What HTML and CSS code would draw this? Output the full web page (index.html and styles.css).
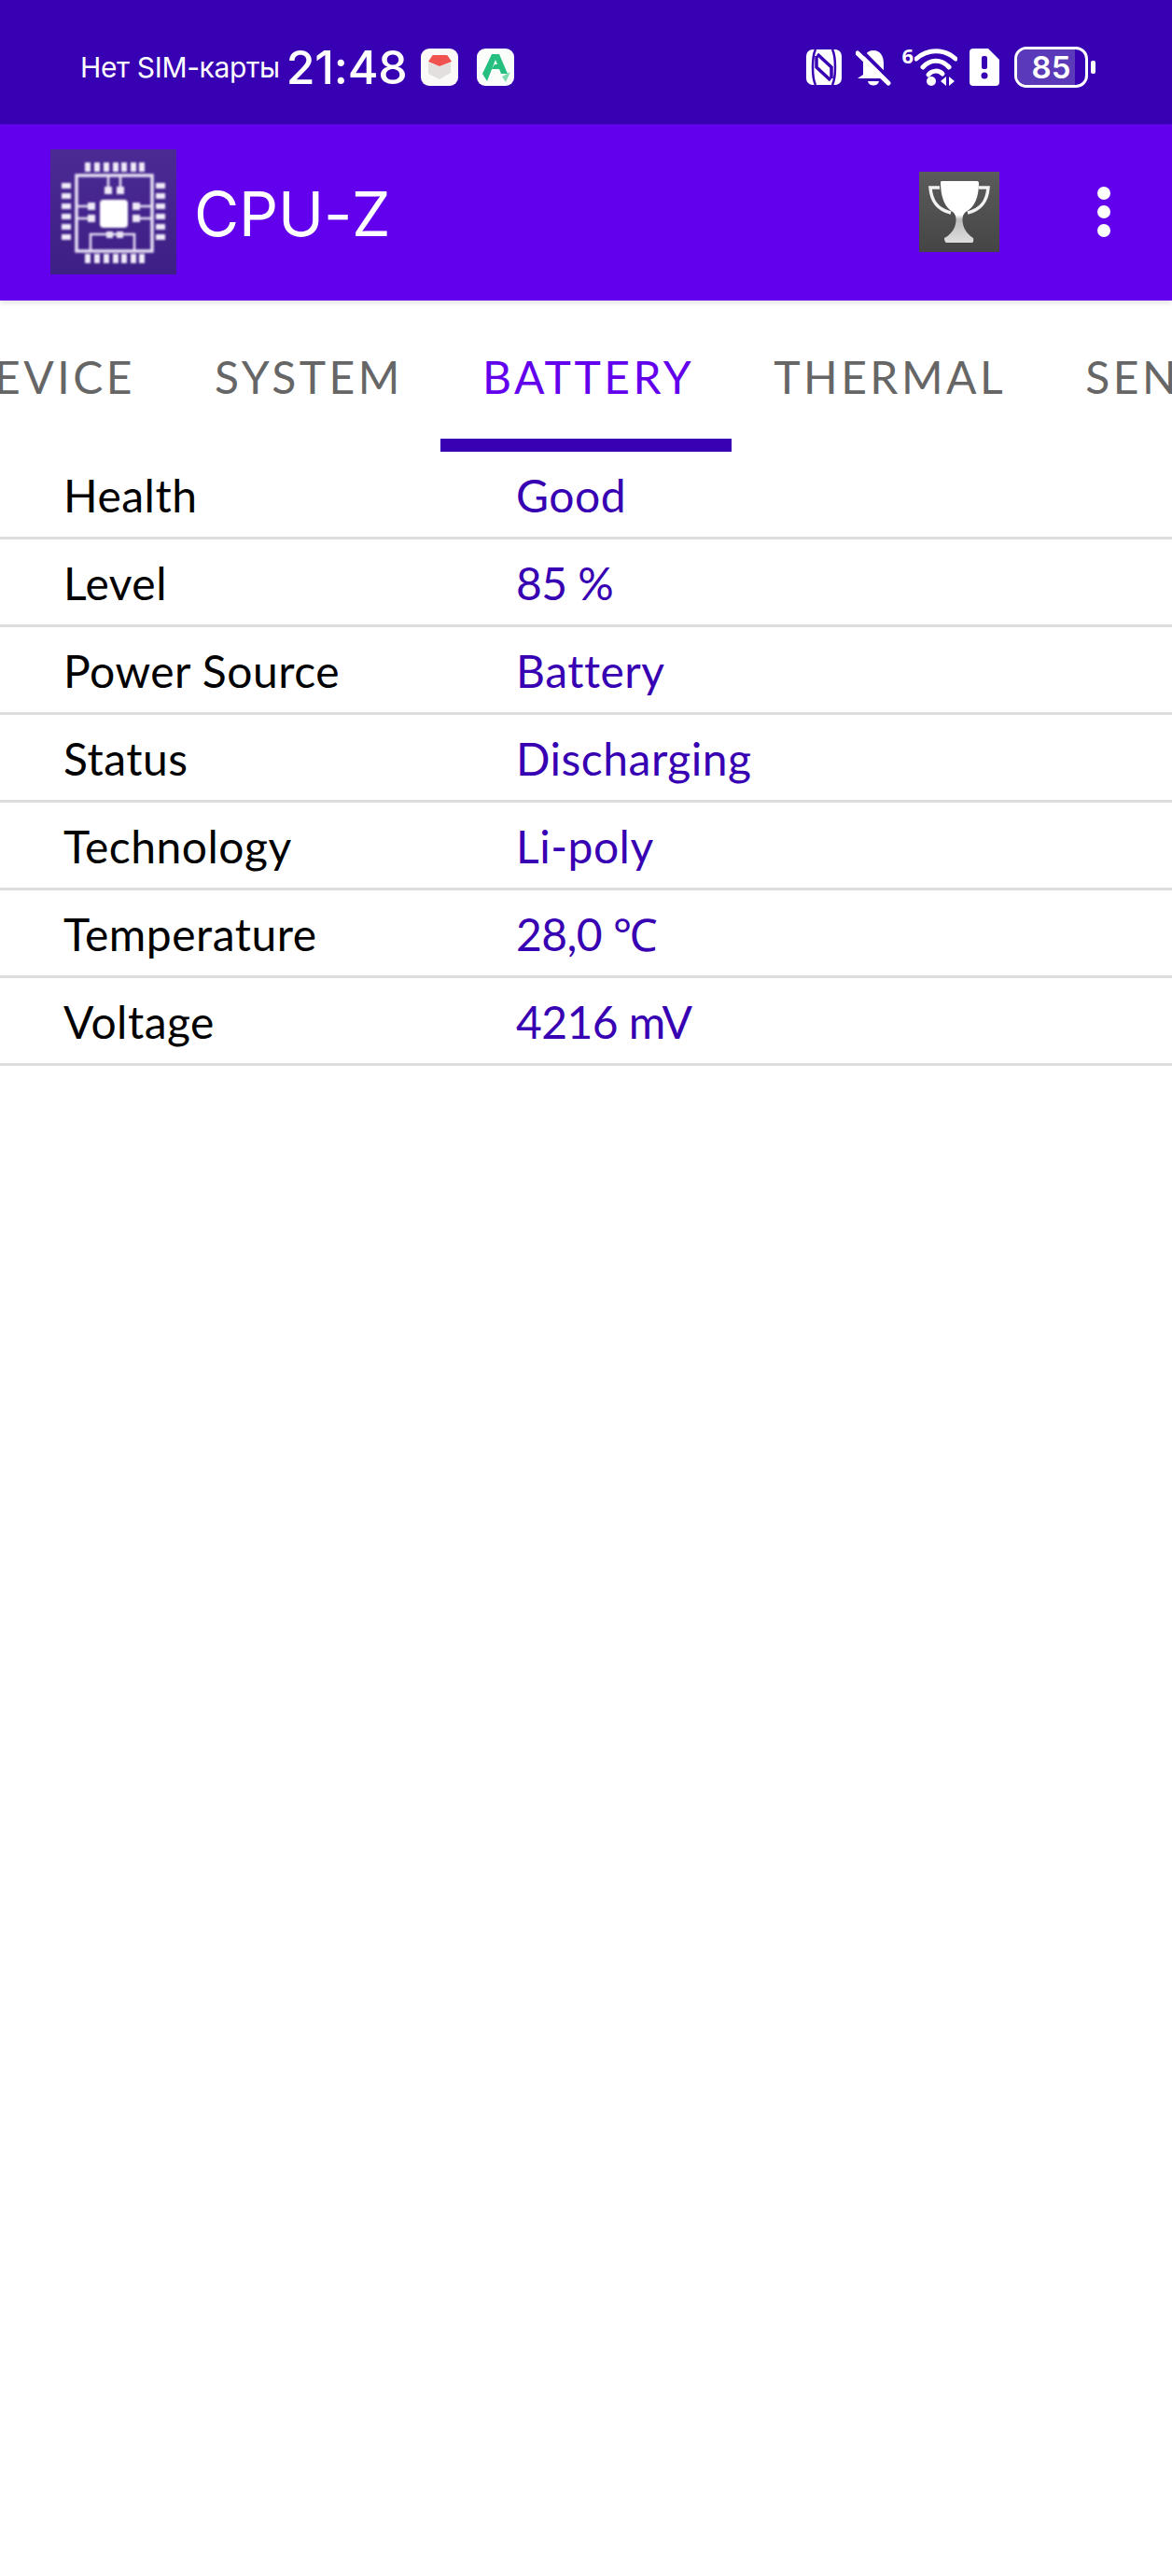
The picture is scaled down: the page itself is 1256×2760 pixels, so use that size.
FILE: index.html
```html
<!DOCTYPE html>
<html lang="en">
<head>
    <meta charset="UTF-8">
    <meta name="viewport" content="width=device-width, initial-scale=1.0">
    <title>CPU-Z</title>
    <link rel="stylesheet" href="styles.css">
</head>
<body>
    <!-- Status bar -->
    <div class="status-bar">
        <div class="status-left">
            <span class="sim-text">Нет SIM-карты</span>
            <span class="clock">21:48</span>
            <span class="app-badge">
                <svg viewBox="0 0 40 40" width="40" height="40">
                    <rect width="40" height="40" rx="9" fill="#fbf8f8"/>
                    <path d="M8 15 L20 19 L32 15 V26 L20 33 L8 27 Z" fill="#e3dfdf"/>
                    <path d="M8 14 L12 8 Q12 7 14 7 H27 Q29 7 29 8 L33 14 L20 19 Z" fill="#f0524f"/>
                </svg>
            </span>
            <span class="app-badge">
                <svg viewBox="0 0 40 40" width="40" height="40">
                    <rect width="40" height="40" rx="9" fill="#fbfdfb"/>
                    <path d="M16 6 H24 L33 27 H26 L24 22 H16 L19 17 H22 L20 12 L11 35 L6 27 Z" fill="#25c07f"/>
                    <path d="M27 30 L36 25 L31 36 Z" fill="#7fdcae"/>
                </svg>
            </span>
        </div>
        <div class="status-right">
            <svg class="icon-nfc" viewBox="0 0 38 38" width="38" height="38">
                <rect width="38" height="38" rx="7" fill="#fff"/>
                <path d="M10 0 C6 8 6 30 10 38" fill="none" stroke="#3700b3" stroke-width="2.5"/>
                <path d="M28 0 C32 8 32 30 28 38" fill="none" stroke="#3700b3" stroke-width="2.5"/>
                <path d="M12 5 L27 19 V31 M26 33 L11 19 V7" fill="none" stroke="#3700b3" stroke-width="3.5"/>
            </svg>
            <svg class="icon-bell" viewBox="0 0 38 40" width="38" height="40">
                <path d="M19 2 C27 2 30 9 30 16 V25 L36 32 H2 L8 28 V15 C8 8 12 2 19 2 Z" fill="#fff"/>
                <path d="M13 35 H25 C24 41 14 41 13 35 Z" fill="#fff"/>
                <path d="M5 1 L38 34" stroke="#3700b3" stroke-width="4"/>
                <path d="M2 5 L35 37" stroke="#fff" stroke-width="5" stroke-linecap="round"/>
            </svg>
            <span class="wifi-six">6</span>
            <svg class="icon-wifi" viewBox="0 0 46 42" width="46" height="42">
                <path d="M2 12 C14 1 32 1 44 12" fill="none" stroke="#fff" stroke-width="5" stroke-linecap="round"/>
                <path d="M9 21 C17 12 29 12 37 21" fill="none" stroke="#fff" stroke-width="5" stroke-linecap="round"/>
                <path d="M15 29 C19 24 26 24 30 28" fill="none" stroke="#fff" stroke-width="5" stroke-linecap="round"/>
                <circle cx="18" cy="36" r="5" fill="#fff"/>
                <path d="M34 31 V41 L28 36 Z M37 31 V41 L43 36 Z" fill="#fff"/>
            </svg>
            <svg class="icon-sim" viewBox="0 0 32 40" width="32" height="40">
                <path d="M4 0 H20 L32 12 V36 Q32 40 28 40 H4 Q0 40 0 36 V4 Q0 0 4 0 Z" fill="#fff"/>
                <rect x="13" y="8" width="6" height="14" rx="2" fill="#3700b3"/>
                <circle cx="16" cy="29" r="3.5" fill="#3700b3"/>
            </svg>
            <div class="battery">
                <div class="battery-body">
                    <div class="battery-fill"></div>
                    <span class="battery-level">85</span>
                </div>
                <div class="battery-nub"></div>
            </div>
        </div>
    </div>

    <!-- App bar -->
    <div class="app-bar">
        <svg class="app-logo" viewBox="0 0 135 134" width="135" height="134">
            <defs>
                <linearGradient id="logoBg" x1="0" y1="0" x2="0" y2="1">
                    <stop offset="0" stop-color="#4b2a94"/>
                    <stop offset="1" stop-color="#3d1f85"/>
                </linearGradient>
                <filter id="soft"><feGaussianBlur stdDeviation="0.8"/></filter>
            </defs>
            <rect width="135" height="134" fill="url(#logoBg)"/>
            <g filter="url(#soft)">
                <g fill="#efe9f8">
                    <rect x="37" y="14" width="6" height="10"/><rect x="47" y="14" width="6" height="10"/>
                    <rect x="57" y="14" width="6" height="10"/><rect x="67" y="14" width="6" height="10"/>
                    <rect x="76" y="14" width="6" height="10"/><rect x="86" y="14" width="6" height="10"/>
                    <rect x="95" y="14" width="6" height="10"/>
                    <rect x="37" y="112" width="6" height="10"/><rect x="47" y="112" width="6" height="10"/>
                    <rect x="57" y="112" width="6" height="10"/><rect x="67" y="112" width="6" height="10"/>
                    <rect x="76" y="112" width="6" height="10"/><rect x="86" y="112" width="6" height="10"/>
                    <rect x="95" y="112" width="6" height="10"/>
                    <rect x="12" y="36" width="10" height="6"/><rect x="12" y="47" width="10" height="6"/>
                    <rect x="12" y="58" width="10" height="6"/><rect x="12" y="69" width="10" height="6"/>
                    <rect x="12" y="80" width="10" height="6"/><rect x="12" y="91" width="10" height="6"/>
                    <rect x="113" y="36" width="10" height="6"/><rect x="113" y="47" width="10" height="6"/>
                    <rect x="113" y="58" width="10" height="6"/><rect x="113" y="69" width="10" height="6"/>
                    <rect x="113" y="80" width="10" height="6"/><rect x="113" y="91" width="10" height="6"/>
                    <rect x="53" y="54" width="30" height="30" rx="4" fill="#fff"/>
                    <rect x="58" y="40" width="8" height="8"/><rect x="71" y="40" width="8" height="8"/>
                    <rect x="40" y="57" width="8" height="8"/><rect x="40" y="70" width="8" height="8"/>
                    <rect x="88" y="57" width="8" height="8"/><rect x="88" y="70" width="8" height="8"/>
                    <rect x="60" y="88" width="7" height="7"/><rect x="71" y="88" width="7" height="7"/>
                </g>
                <g fill="none" stroke="#e6dff4">
                    <rect x="28" y="28" width="81" height="81" stroke-width="3.5"/>
                    <path d="M62 29 V40 M75 29 V40 M29 61 H40 M29 74 H40 M96 61 H108 M96 74 H108" stroke-width="2.5"/>
                    <path d="M43 108 V91 H90 V108" stroke-width="2.5"/>
                </g>
            </g>
        </svg>
        <span class="app-title">CPU-Z</span>
        <svg class="trophy" viewBox="0 0 86 86" width="86" height="86">
            <defs>
                <linearGradient id="trophyBg" x1="0" y1="0" x2="0" y2="1">
                    <stop offset="0" stop-color="#5b5b5b"/>
                    <stop offset="1" stop-color="#454545"/>
                </linearGradient>
                <linearGradient id="cup" x1="0" y1="0" x2="0" y2="1">
                    <stop offset="0" stop-color="#fff"/>
                    <stop offset="0.55" stop-color="#fff"/>
                    <stop offset="0.62" stop-color="#bdbdbd"/>
                    <stop offset="1" stop-color="#dedede"/>
                </linearGradient>
            </defs>
            <rect width="86" height="86" fill="url(#trophyBg)"/>
            <path d="M22 17 H12 C13 30 18 40 34 44 M64 17 H74 C73 30 68 40 52 44" fill="none" stroke="#f2f2f2" stroke-width="3.5"/>
            <path d="M23 11 Q23 10 25 10 H62 Q64 10 64 12 C64 26 60 38 50 43 C46 46 46 52 47 56 C48 62 53 68 58 71 Q59 76 56 76 H29 Q27 75 27 71 C33 68 38 62 39 56 C40 52 40 46 36 43 C27 38 23 26 23 11 Z" fill="url(#cup)"/>
        </svg>
        <div class="overflow-menu">
            <span class="overflow-dot"></span>
            <span class="overflow-dot"></span>
            <span class="overflow-dot"></span>
        </div>
    </div>

    <!-- Tabs -->
    <div class="tabs">
        <div class="tab-strip">
            <div class="tab">DEVICE</div>
            <div class="tab">SYSTEM</div>
            <div class="tab active">BATTERY</div>
            <div class="tab">THERMAL</div>
            <div class="tab">SENSORS</div>
        </div>
    </div>

    <!-- Battery info -->
    <div class="info-list">
        <div class="info-row"><span class="info-label">Health</span><span class="info-value">Good</span></div>
        <div class="info-row"><span class="info-label">Level</span><span class="info-value number">85 %</span></div>
        <div class="info-row"><span class="info-label">Power Source</span><span class="info-value">Battery</span></div>
        <div class="info-row"><span class="info-label">Status</span><span class="info-value">Discharging</span></div>
        <div class="info-row"><span class="info-label">Technology</span><span class="info-value">Li-poly</span></div>
        <div class="info-row"><span class="info-label">Temperature</span><span class="info-value number">28,0 ℃</span></div>
        <div class="info-row"><span class="info-label">Voltage</span><span class="info-value number">4216 mV</span></div>
    </div>
</body>
</html>
```

FILE: styles.css
```css
html, body {
    margin: 0;
    padding: 0;
}

body {
    width: 1256px;
    height: 2760px;
    overflow: hidden;
    background-color: #fff;
    font-family: Lato, "Noto Sans", sans-serif;
}

/* Status bar */
.status-bar {
    display: flex;
    justify-content: space-between;
    align-items: center;
    height: 133px;
    padding: 11px 82px 0 86px;
    box-sizing: border-box;
    background-color: #3700b3;
    color: #fff;
}

.status-left,
.status-right {
    display: flex;
    align-items: center;
}

.sim-text {
    font-family: Inter, sans-serif;
    font-size: 30px;
    letter-spacing: -0.35px;
    margin-right: 7px;
}

.clock {
    font-family: Inter, sans-serif;
    font-size: 50px;
    font-weight: 500;
    letter-spacing: -0.3px;
    margin-right: 15px;
}

.app-badge {
    display: flex;
    margin-right: 20px;
}

.status-right svg {
    display: block;
}

.icon-nfc {
    margin-right: 15px;
}

.wifi-six {
    font-family: "Noto Sans", sans-serif;
    font-size: 22px;
    font-weight: 700;
    align-self: flex-start;
    line-height: 24px;
    margin-left: 11px;
    margin-top: -3px;
}

.icon-wifi {
    margin-left: 1px;
}

.icon-sim {
    margin-left: 13px;
    margin-right: 16px;
}

.battery {
    display: flex;
    align-items: center;
}

.battery-body {
    position: relative;
    display: flex;
    align-items: center;
    justify-content: center;
    width: 79px;
    height: 44px;
    box-sizing: border-box;
    border: 3px solid #fff;
    border-radius: 13px;
    overflow: hidden;
}

.battery-fill {
    position: absolute;
    left: 0;
    top: 0;
    bottom: 0;
    width: 85%;
    background-color: #5a3ab8;
}

.battery-level {
    position: relative;
    font-family: Inter, sans-serif;
    font-size: 33px;
    font-weight: 600;
}

.battery-nub {
    width: 5px;
    height: 14px;
    margin-left: 3px;
    border-radius: 2px;
    background-color: #fff;
}

/* App bar */
.app-bar {
    position: relative;
    display: flex;
    align-items: center;
    height: 189px;
    padding: 0 0 0 54px;
    box-sizing: border-box;
    background-color: #6200ee;
    color: #fff;
    box-shadow: 0 3px 5px rgba(0, 0, 0, 0.1);
}

.app-logo {
    margin-top: -2px;
    flex-shrink: 0;
}

.app-title {
    font-family: Inter, sans-serif;
    font-size: 66px;
    margin-left: 19px;
    margin-top: 2px;
    letter-spacing: -0.2px;
}

.trophy {
    margin-left: auto;
    margin-top: -2px;
}

.overflow-menu {
    display: flex;
    flex-direction: column;
    gap: 6px;
    margin: -2px 66px 0 105px;
}

.overflow-dot {
    width: 14px;
    height: 14px;
    border-radius: 50%;
    background-color: #fff;
}

/* Tabs */
.tabs {
    height: 162px;
    overflow: hidden;
}

.tab-strip {
    display: flex;
    height: 100%;
    margin-left: -91px;
    width: 1500px;
}

.tab {
    display: flex;
    align-items: center;
    padding: 1px 40px 0 45px;
    height: 162px;
    box-sizing: border-box;
    font-size: 48px;
    letter-spacing: 3.5px;
    color: #666;
}

.tab.active {
    color: #6200ee;
    border-bottom: 14px solid #3700b3;
    padding-top: 15px;
}

/* Info rows */
.info-row {
    display: flex;
    align-items: center;
    height: 94px;
    box-sizing: border-box;
    padding-left: 68px;
    padding-top: 1px;
    border-bottom: 3px solid #ddd;
    font-size: 48px;
    letter-spacing: 0.5px;
}

.info-label {
    width: 485px;
    color: #000;
}

.info-value {
    color: #3700b3;
}

.info-value.number {
    letter-spacing: -0.6px;
}
```
